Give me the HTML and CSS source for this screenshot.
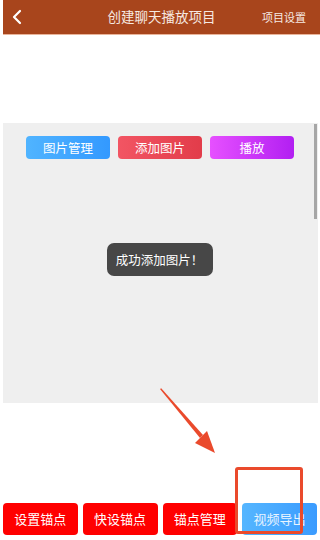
FILE: index.html
```html
<!DOCTYPE html>
<html lang="zh">
<head>
<meta charset="utf-8">
<link rel="stylesheet" href="styles.css">
</head>
<body>
<div class="app">
  <header class="topbar">
    <svg class="back" width="12" height="16" viewBox="0 0 12 16"><path d="M9 2 L3 8 L9 14" fill="none" stroke="#fff" stroke-width="2.2" stroke-linecap="round" stroke-linejoin="round"/></svg>
    <div class="title">创建聊天播放项目</div>
    <div class="settings">项目设置</div>
  </header>
  <section class="panel">
    <div class="tools">
      <div class="tbtn blue">图片管理</div>
      <div class="tbtn red">添加图片</div>
      <div class="tbtn purple">播放</div>
    </div>
    <div class="toast">成功添加图片！</div>
    <div class="scrollbar"></div>
  </section>
  <footer class="bottom">
    <div class="bbtn">设置锚点</div>
    <div class="bbtn">快设锚点</div>
    <div class="bbtn">锚点管理</div>
    <div class="bbtn export">视频导出</div>
  </footer>
  <svg class="arrow" width="320" height="540" viewBox="0 0 320 540">
    <polygon points="160,389 161.2,388.2 203,435 200,438" fill="#ea4a2c"/>
    <polygon points="215,453 195,443 207,431" fill="#ea4a2c"/>
  </svg>
  <div class="highlight"></div>
</div>
</body>
</html>
```
FILE: styles.css
```css
* { box-sizing: border-box; }
html, body { margin: 0; padding: 0; background: #fff; }
body { font-family: "Noto Sans CJK SC", "Noto Sans", sans-serif; }
.app { position: relative; width: 320px; height: 540px; overflow: hidden; padding-left: 3px; }
.topbar {
  height: 35px;
  background: #a8451c;
  border-bottom: 1px solid #e9b49a;
  display: flex;
  align-items: center;
  position: relative;
  color: #fff;
}
.back { margin-left: 8px; }
.title {
  position: absolute; left: 0; right: 0; text-align: center;
  font-size: 13.5px; color: #f6e9e2; line-height: 20px; top: 6px;
  padding-left: 0;
}
.settings {
  margin-left: auto; margin-right: 14px; font-size: 11px; color: #f6e9e2; line-height: 16px;
  position: relative;
}
.panel {
  position: relative;
  margin-top: 88px;
  width: 315px;
  height: 280px;
  background: #efefef;
  padding-top: 13px;
}
.tools { display: flex; gap: 8px; padding-left: 23px; }
.tbtn {
  width: 84px; height: 23px; border-radius: 4px;
  color: #fff; font-size: 12.5px; line-height: 23px; text-align: center;
}
.blue { background: linear-gradient(90deg, #50b4ff, #3399ff); }
.red { background: linear-gradient(90deg, #f25563, #e23c4a); }
.purple { background: linear-gradient(90deg, #e650ff, #b21ff2); }
.toast {
  width: 106px; height: 33px; margin: 84px auto 0;
  background: #474747; border-radius: 7px;
  color: #fff; font-size: 12.5px; line-height: 33px; text-align: center;
  position: relative; left: -1px;
}
.scrollbar {
  position: absolute; right: 1px; top: 1px; width: 3px; height: 95px; background: #a6a6a6;
}
.bottom {
  margin-top: 100px;
  width: 314px;
  display: grid; grid-template-columns: repeat(4, 1fr); gap: 5px;
}
.bbtn {
  height: 32px; border-radius: 4px; background: #ff0000;
  color: #fff; font-size: 13px; line-height: 32px; text-align: center;
}
.bbtn.export { background: linear-gradient(90deg, #55b6ff, #3a9bff); color: #e8f4ff; }
.arrow { position: absolute; left: 0; top: 0; pointer-events: none; }
.highlight {
  position: absolute; left: 235px; top: 467px; width: 68px; height: 67px;
  border: 3px solid #ea4a2c; border-radius: 3px;
}
```
